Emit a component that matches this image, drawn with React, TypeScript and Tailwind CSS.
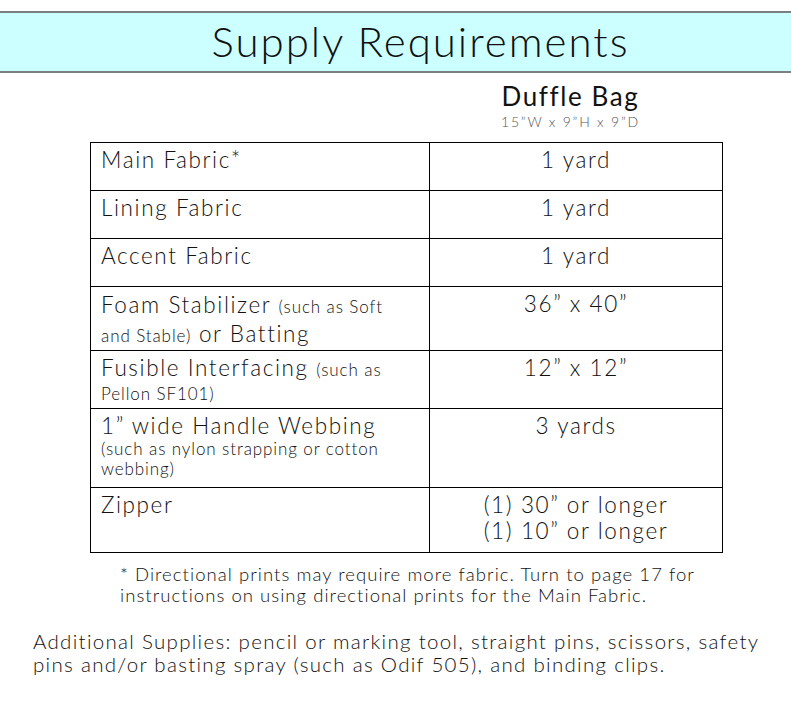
import React from "react";

const rows: { left: React.ReactNode; right: React.ReactNode; h: string }[] = [
  { left: <>Main Fabric*</>, right: <>1 yard</>, h: "h-[48px]" },
  { left: <>Lining Fabric</>, right: <>1 yard</>, h: "h-[48px]" },
  { left: <>Accent Fabric</>, right: <>1 yard</>, h: "h-[48px]" },
  {
    left: (
      <div className="leading-[27px]">
        Foam Stabilizer <span className="text-[17px] tracking-[0.9px]">(such as Soft</span>
        <br />
        <span className="text-[17px] tracking-[0.9px]">and Stable)</span> or Batting
      </div>
    ),
    right: <>36” x 40”</>,
    h: "h-[64px]",
  },
  {
    left: (
      <div className="leading-[22px]">
        <span className="leading-[26px]">Fusible Interfacing</span>{" "}
        <span className="text-[17px] tracking-[0.9px]">(such as</span>
        <br />
        <span className="text-[17px] tracking-[0.9px]">Pellon SF101)</span>
      </div>
    ),
    right: <>12” x 12”</>,
    h: "h-[58px]",
  },
  {
    left: (
      <div className="leading-[26px]">
        1” wide Handle Webbing
        <div className="text-[17px] leading-[20px] tracking-[0.9px]">
          (such as nylon strapping or cotton
          <br />
          webbing)
        </div>
      </div>
    ),
    right: <>3 yards</>,
    h: "h-[79px]",
  },
  {
    left: <>Zipper</>,
    right: (
      <>
        (1) 30” or longer
        <br />
        (1) 10” or longer
      </>
    ),
    h: "h-[65px]",
  },
];

export default function App() {
  return (
    <div
      className="w-[791px] h-[706px] bg-white text-[#111] font-light"
      style={{ fontFamily: "Lato, 'Open Sans', sans-serif" }}
    >
      <div className="pt-[11px]">
        <div className="h-[62px] bg-[#ccffff] border-y-2 border-[#7a8080] flex items-center justify-center">
          <h1 className="text-[42px] font-light tracking-[2px] leading-none pl-[50px] pb-[2px]">
            Supply Requirements
          </h1>
        </div>
      </div>
      <div className="ml-[429px] w-[293px] flex flex-col items-center pt-[8px] pr-[10px] h-[69px]">
        <div className="text-[26px] leading-[30px] font-normal tracking-[1.6px]">Duffle Bag</div>
        <div className="text-[14px] leading-[16px] mt-[3px] text-[#555] tracking-[1.8px]">15”W x 9”H x 9”D</div>
      </div>
      <table className="ml-[90px] w-[633px] border-collapse table-fixed">
        <tbody>
          {rows.map((r, i) => (
            <tr key={i} className={r.h}>
              <td className="w-[339px] border border-black align-top pl-[10px] pr-[4px] pt-[4px] text-[22.5px] leading-[26px] tracking-[1.6px] overflow-hidden">
                {r.left}
              </td>
              <td className="border border-black align-top text-center pt-[4px] text-[22.5px] leading-[26px] tracking-[1.6px]">
                {r.right}
              </td>
            </tr>
          ))}
        </tbody>
      </table>
      <div className="ml-[120px] mt-[11px] w-[660px] text-[18.5px] leading-[21px] tracking-[1.05px]">
        * Directional prints may require more fabric. Turn to page 17 for
        <br />
        instructions on using directional prints for the Main Fabric.
      </div>
      <div className="ml-[33px] mt-[24px] w-[758px] text-[20.5px] leading-[23px] tracking-[1.3px]">
        Additional Supplies: pencil or marking tool, straight pins, scissors, safety
        <br />
        pins and/or basting spray (such as Odif 505), and binding clips.
      </div>
    </div>
  );
}
